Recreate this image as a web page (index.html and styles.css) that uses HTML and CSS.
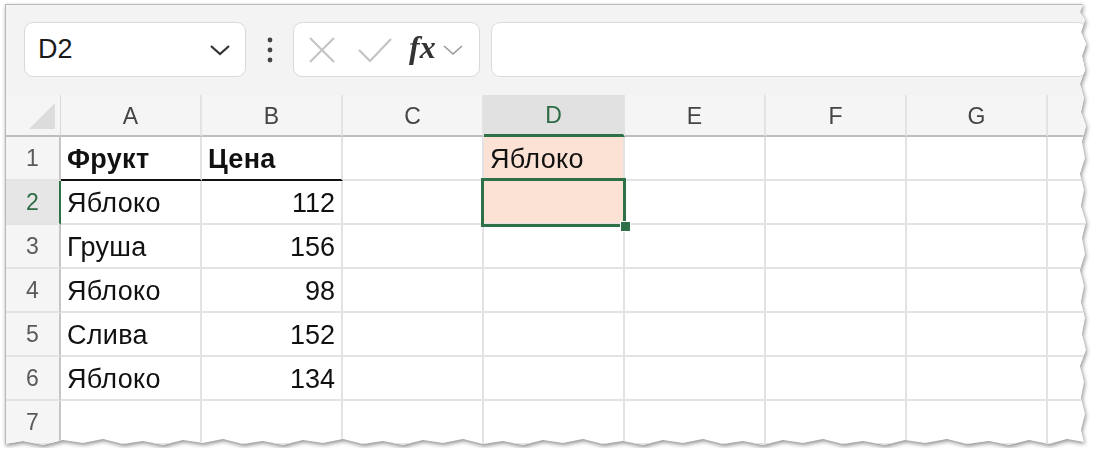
FILE: index.html
```html
<!DOCTYPE html>
<html lang="ru">
<head>
    <meta charset="UTF-8">
    <title>Excel</title>
    <link rel="stylesheet" href="styles.css">
</head>
<body>
    <div class="shadow">
        <div class="sheet">
            <div class="toolbar">
                <div class="namebox">
                    <span>D2</span>
                    <svg class="chev" width="22" height="12" viewBox="0 0 22 12"><path d="M2 2 L11 10 L20 2" fill="none" stroke="#333" stroke-width="2.2"/></svg>
                </div>
                <div class="dots">
                    <svg width="8" height="28" viewBox="0 0 8 28"><circle cx="4" cy="4" r="2.4" fill="#444"/><circle cx="4" cy="14" r="2.4" fill="#444"/><circle cx="4" cy="24" r="2.4" fill="#444"/></svg>
                </div>
                <div class="fxbox">
                    <svg width="30" height="30" viewBox="0 0 30 30"><path d="M3 3 L27 27 M27 3 L3 27" stroke="#c4c4c4" stroke-width="2.2" fill="none"/></svg>
                    <svg width="36" height="28" viewBox="0 0 36 28"><path d="M2 14 L13 25 L34 3" stroke="#c4c4c4" stroke-width="2.2" fill="none"/></svg>
                    <span class="fx">fx</span>
                    <svg width="22" height="12" viewBox="0 0 22 12"><path d="M2 2 L11 10 L20 2" fill="none" stroke="#999" stroke-width="1.6"/></svg>
                </div>
                <div class="formula"></div>
            </div>

            <div class="grid">
                <div class="corner"><span class="tri"></span></div>
                <div class="colhead">A</div>
                <div class="colhead">B</div>
                <div class="colhead">C</div>
                <div class="colhead sel">D</div>
                <div class="colhead">E</div>
                <div class="colhead">F</div>
                <div class="colhead">G</div>
                <div class="colhead"></div>

                <div class="rowhead">1</div>
                <div class="cell bold under">Фрукт</div>
                <div class="cell bold under">Цена</div>
                <div class="cell"></div>
                <div class="cell fill">Яблоко</div>
                <div class="cell"></div>
                <div class="cell"></div>
                <div class="cell"></div>
                <div class="cell"></div>

                <div class="rowhead sel">2</div>
                <div class="cell">Яблоко</div>
                <div class="cell num">112</div>
                <div class="cell"></div>
                <div class="cell fill active"></div>
                <div class="cell"></div>
                <div class="cell"></div>
                <div class="cell"></div>
                <div class="cell"></div>

                <div class="rowhead">3</div>
                <div class="cell">Груша</div>
                <div class="cell num">156</div>
                <div class="cell"></div>
                <div class="cell"></div>
                <div class="cell"></div>
                <div class="cell"></div>
                <div class="cell"></div>
                <div class="cell"></div>

                <div class="rowhead">4</div>
                <div class="cell">Яблоко</div>
                <div class="cell num">98</div>
                <div class="cell"></div>
                <div class="cell"></div>
                <div class="cell"></div>
                <div class="cell"></div>
                <div class="cell"></div>
                <div class="cell"></div>

                <div class="rowhead">5</div>
                <div class="cell">Слива</div>
                <div class="cell num">152</div>
                <div class="cell"></div>
                <div class="cell"></div>
                <div class="cell"></div>
                <div class="cell"></div>
                <div class="cell"></div>
                <div class="cell"></div>

                <div class="rowhead">6</div>
                <div class="cell">Яблоко</div>
                <div class="cell num">134</div>
                <div class="cell"></div>
                <div class="cell"></div>
                <div class="cell"></div>
                <div class="cell"></div>
                <div class="cell"></div>
                <div class="cell"></div>

                <div class="rowhead">7</div>
                <div class="cell"></div>
                <div class="cell"></div>
                <div class="cell"></div>
                <div class="cell"></div>
                <div class="cell"></div>
                <div class="cell"></div>
                <div class="cell"></div>
                <div class="cell"></div>
            </div>
        </div>
    </div>
</body>
</html>
```

FILE: styles.css
```css
body {
    margin: 0;
    padding: 4px 0 0 5px;
    background: #fff;
    font-family: "Liberation Sans", Arial, sans-serif;
}
.shadow {
    width: 1082px;
    filter: drop-shadow(1px 2px 2px rgba(0, 0, 0, 0.45));
}
.sheet {
    width: 1082px;
    height: 444px;
    overflow: hidden;
    background: #fff;
    border-top: 1px solid #b8b8b8;
    border-left: 1px solid #b8b8b8;
    box-sizing: border-box;
    clip-path: polygon(0 0, 1078px 0, 1075px 8px, 1080px 16px, 1076px 28px, 1081px 40px, 1077px 52px, 1080px 66px, 1075px 80px, 1079px 94px, 1076px 108px, 1081px 122px, 1077px 138px, 1080px 154px, 1075px 170px, 1079px 186px, 1076px 202px, 1081px 218px, 1077px 234px, 1080px 250px, 1075px 266px, 1079px 282px, 1076px 298px, 1080px 314px, 1077px 330px, 1081px 346px, 1075px 362px, 1079px 378px, 1076px 394px, 1080px 410px, 1076px 426px, 1079px 438px, 1062px 435px, 1044px 440px, 1024px 436px, 1004px 441px, 984px 437px, 962px 440px, 942px 435px, 920px 439px, 900px 436px, 880px 441px, 858px 437px, 838px 440px, 818px 435px, 798px 439px, 778px 436px, 758px 441px, 738px 437px, 718px 440px, 698px 435px, 678px 439px, 658px 436px, 638px 441px, 618px 437px, 598px 440px, 578px 435px, 558px 439px, 538px 436px, 518px 441px, 498px 437px, 478px 440px, 458px 435px, 438px 439px, 418px 436px, 398px 441px, 378px 437px, 358px 440px, 338px 435px, 318px 439px, 298px 436px, 278px 441px, 258px 437px, 238px 440px, 218px 435px, 198px 439px, 178px 436px, 158px 441px, 138px 437px, 118px 440px, 98px 435px, 78px 439px, 58px 436px, 38px 441px, 18px 437px, 0 440px);
}

/* formula bar */
.toolbar {
    height: 90px;
    background: #f3f3f3;
    display: flex;
    align-items: flex-start;
    padding: 17px 0 0 18px;
    box-sizing: border-box;
}
.namebox, .fxbox, .formula {
    height: 55px;
    background: #fff;
    border: 1px solid #dadada;
    border-radius: 9px;
    box-sizing: border-box;
    display: flex;
    align-items: center;
}
.namebox {
    width: 222px;
    padding: 0 14px 0 13px;
    justify-content: space-between;
    font-size: 27px;
    color: #1a1a1a;
}
.dots {
    width: 47px;
    height: 55px;
    display: flex;
    align-items: center;
    justify-content: center;
}
.fxbox {
    width: 187px;
    padding: 0 0 0 13px;
    gap: 14px;
}
.fxbox svg:nth-child(2) {
    margin-left: 6px;
}
.fx {
    font-family: "Liberation Serif", serif;
    font-style: italic;
    font-weight: bold;
    font-size: 32px;
    color: #333;
    margin-left: 2px;
    margin-right: -8px;
    margin-top: -4px;
}
.formula {
    margin-left: 11px;
    flex: 1;
}

/* cells */
.grid {
    display: grid;
    grid-template-columns: 55px repeat(8, 141px);
    grid-template-rows: 42px repeat(7, 44px);
}
.corner, .colhead, .rowhead {
    background: #f5f5f5;
    color: #444;
    font-size: 23px;
    display: flex;
    align-items: center;
    justify-content: center;
    box-sizing: border-box;
}
.corner {
    position: relative;
    border-right: 1px solid #d8d8d8;
    border-bottom: 2px solid #bdbdbd;
}
.tri {
    position: absolute;
    right: 5px;
    bottom: 6px;
    width: 0;
    height: 0;
    border-left: 26px solid transparent;
    border-bottom: 26px solid #dcdcdc;
}
.colhead {
    border-right: 2px solid #e3e3e3;
    border-bottom: 2px solid #bdbdbd;
    padding-top: 2px;
}
.colhead.sel {
    background: #e1e1e1;
    color: #2d6b45;
    border-bottom: 3px solid #2e7048;
}
.rowhead {
    border-right: 2px solid #c6c6c6;
    border-bottom: 2px solid #e3e3e3;
    color: #5a5a5a;
}
.rowhead.sel {
    background: #e6e6e6;
    color: #2d6b45;
    border-right-color: #2e7048;
}
.cell {
    border-right: 2px solid #e3e3e3;
    border-bottom: 2px solid #e3e3e3;
    font-size: 27px;
    letter-spacing: 0.3px;
    color: #111;
    padding: 2px 6px 0 6px;
    display: flex;
    align-items: center;
    box-sizing: border-box;
    white-space: nowrap;
}
.bold {
    font-weight: bold;
}
.under {
    border-bottom: 2px solid #111;
}
.num {
    justify-content: flex-end;
    letter-spacing: 0;
}
.fill {
    background: #fbe2d5;
}
.active {
    position: relative;
}
.active::before {
    content: "";
    position: absolute;
    left: -3px;
    top: -3px;
    right: -3px;
    bottom: -4px;
    border: 3px solid #2e7048;
}
.active::after {
    content: "";
    position: absolute;
    right: -8px;
    bottom: -9px;
    width: 9px;
    height: 9px;
    background: #2e7048;
    border: 1px solid #fff;
}
```
